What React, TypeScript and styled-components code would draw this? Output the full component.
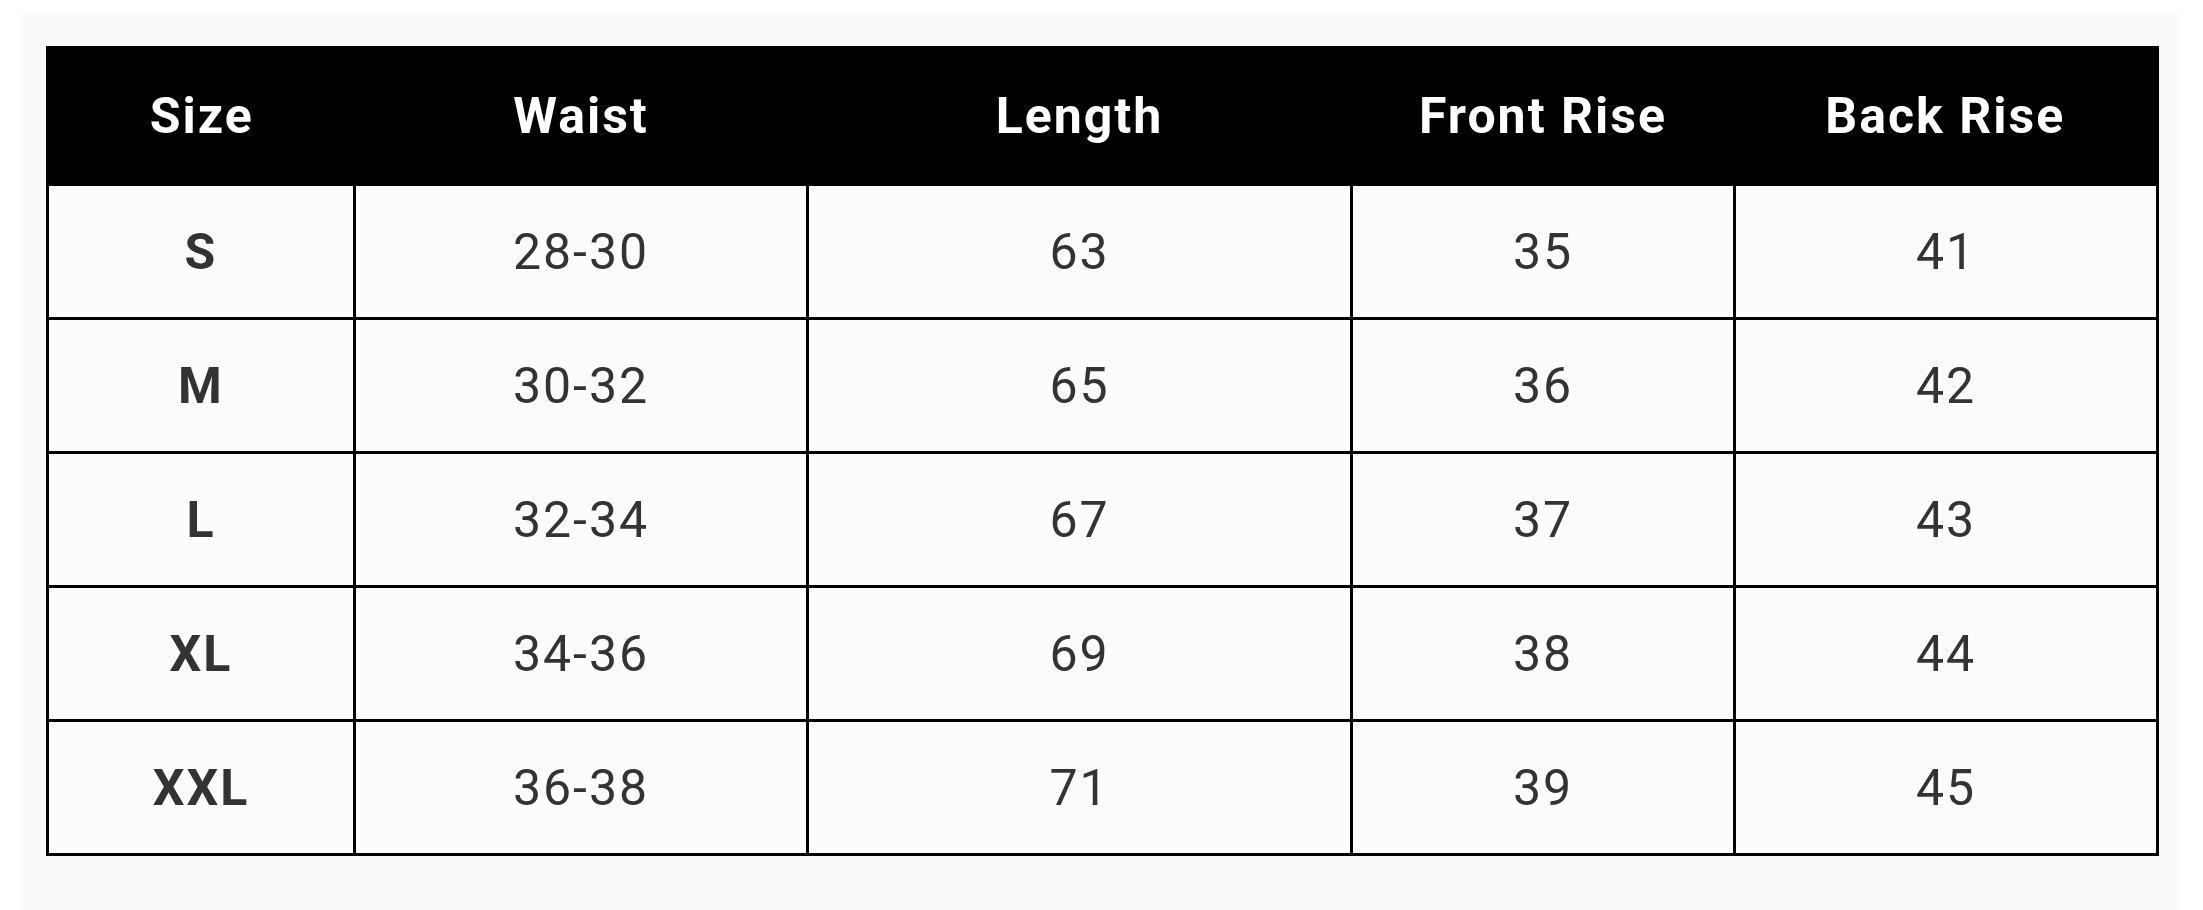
import styled, { createGlobalStyle } from 'styled-components';

const GlobalStyle = createGlobalStyle`
  html, body {
    margin: 0;
    padding: 0;
    background: #ffffff;
  }
  body {
    font-family: Roboto, 'Liberation Sans', sans-serif;
  }
`;

const columns = [
  { label: 'Size', width: 307 },
  { label: 'Waist', width: 453 },
  { label: 'Length', width: 544 },
  { label: 'Front Rise', width: 383 },
  { label: 'Back Rise', width: 423 },
];

const rows = [
  ['S', '28-30', '63', '35', '41'],
  ['M', '30-32', '65', '36', '42'],
  ['L', '32-34', '67', '37', '43'],
  ['XL', '34-36', '69', '38', '44'],
  ['XXL', '36-38', '71', '39', '45'],
];

export default function App() {
  return (
    <>
      <GlobalStyle />
      <Page>
        <Panel>
          <Table>
            <colgroup>
              {columns.map((c) => (
                <col key={c.label} style={{ width: c.width }} />
              ))}
            </colgroup>
            <thead>
              <tr>
                {columns.map((c) => (
                  <HeadCell key={c.label}>{c.label}</HeadCell>
                ))}
              </tr>
            </thead>
            <tbody>
              {rows.map((row) => (
                <tr key={row[0]}>
                  {row.map((value, i) => (
                    <Cell key={i} $strong={i === 0}>
                      {value}
                    </Cell>
                  ))}
                </tr>
              ))}
            </tbody>
          </Table>
        </Panel>
      </Page>
    </>
  );
}

const Page = styled.div`
  width: 2203px;
  height: 910px;
  padding: 14px 24px 0 20px;
  box-sizing: border-box;
  overflow: hidden;
`;

const Panel = styled.div`
  height: 100%;
  background: #fafafa;
  padding: 32px 0 0 26px;
  box-sizing: border-box;
`;

const Table = styled.table`
  border-collapse: collapse;
  table-layout: fixed;
  width: 2110px;
  background: #fcfcfc;
  border: 3px solid #000;
`;

const HeadCell = styled.th`
  height: 134px;
  padding: 0;
  background: #000;
  color: #fff;
  font-size: 50px;
  font-weight: 700;
  letter-spacing: 2px;
  text-align: center;
  vertical-align: middle;
`;

const Cell = styled.td<{ $strong?: boolean }>`
  height: 131px;
  padding: 0;
  border: 3px solid #000;
  color: #333;
  font-size: 50px;
  font-weight: ${(p) => (p.$strong ? 700 : 400)};
  letter-spacing: 2px;
  text-align: center;
  vertical-align: middle;
`;
